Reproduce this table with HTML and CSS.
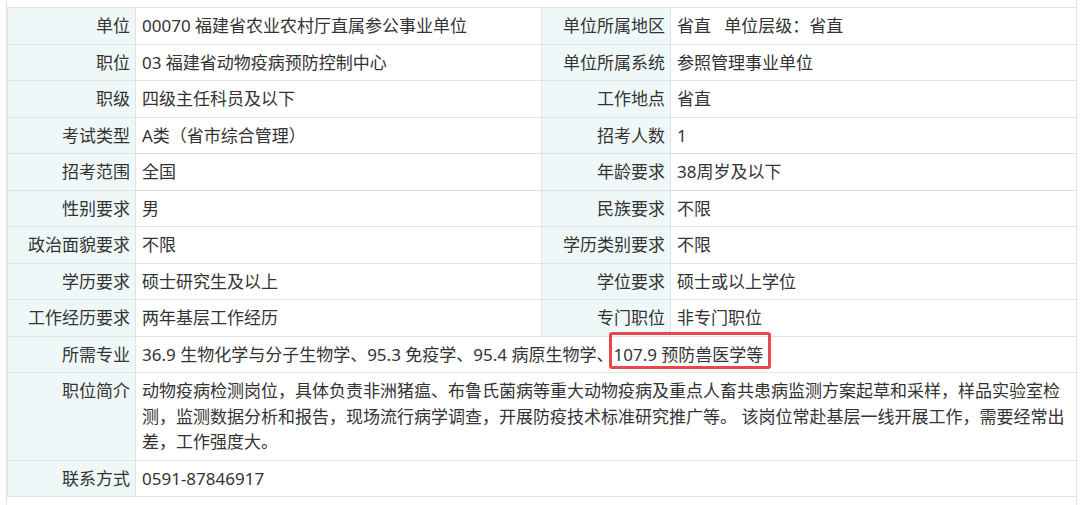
FILE: index.html
```html
<!DOCTYPE html>
<html lang="zh-CN">
<head>
<meta charset="utf-8">
<title>职位信息</title>
<link rel="stylesheet" href="styles.css">
</head>
<body>
<div class="wrap">
  <table class="info">
    <colgroup>
      <col class="c-label1">
      <col class="c-value">
      <col class="c-label2">
      <col class="c-value">
    </colgroup>
    <tbody>
      <tr><th>单位</th><td>00070 福建省农业农村厅直属参公事业单位</td><th>单位所属地区</th><td>省直&nbsp;&nbsp;&nbsp;单位层级：省直</td></tr>
      <tr><th>职位</th><td>03 福建省动物疫病预防控制中心</td><th>单位所属系统</th><td>参照管理事业单位</td></tr>
      <tr><th>职级</th><td>四级主任科员及以下</td><th>工作地点</th><td>省直</td></tr>
      <tr><th>考试类型</th><td>A类（省市综合管理）</td><th>招考人数</th><td>1</td></tr>
      <tr><th>招考范围</th><td>全国</td><th>年龄要求</th><td>38周岁及以下</td></tr>
      <tr><th>性别要求</th><td>男</td><th>民族要求</th><td>不限</td></tr>
      <tr><th>政治面貌要求</th><td>不限</td><th>学历类别要求</th><td>不限</td></tr>
      <tr><th>学历要求</th><td>硕士研究生及以上</td><th>学位要求</th><td>硕士或以上学位</td></tr>
      <tr><th>工作经历要求</th><td>两年基层工作经历</td><th>专门职位</th><td>非专门职位</td></tr>
      <tr><th>所需专业</th><td colspan="3">36.9 生物化学与分子生物学、95.3 免疫学、95.4 病原生物学、<span class="mark">107.9 预防兽医学等</span></td></tr>
      <tr><th class="top">职位简介</th><td colspan="3">动物疫病检测岗位，具体负责非洲猪瘟、布鲁氏菌病等重大动物疫病及重点人畜共患病监测方案起草和采样，样品实验室检测，监测数据分析和报告，现场流行病学调查，开展防疫技术标准研究推广等。 该岗位常赴基层一线开展工作，需要经常出差，工作强度大。</td></tr>
      <tr><th>联系方式</th><td colspan="3">0591-87846917</td></tr>
    </tbody>
  </table>
</div>
</body>
</html>
```
FILE: styles.css
```css
html, body {
  margin: 0;
  padding: 0;
  background: #ffffff;
}

body {
  font-family: "Noto Sans", "Noto Sans CJK SC", sans-serif;
  font-size: 17px;
  color: #333333;
}

.wrap {
  margin-left: 6px;
  width: 1069px;
  height: 505px;
  padding-top: 7px;
  box-sizing: content-box;
  border-left: 1px solid #e6e6e6;
  border-right: 1px solid #e6e6e6;
}

.info {
  width: 1069px;
  table-layout: fixed;
  border-collapse: collapse;
  border: 1px solid #e2e2e2;
}

.c-label1 { width: 128px; }
.c-label2 { width: 129px; }
.c-value { width: 406px; }

.info th,
.info td {
  border: 1px solid #e2e2e2;
  padding: 5px 6px;
  line-height: 25.5px;
  vertical-align: middle;
  font-weight: normal;
}

.info th {
  background: #eff8f8;
  text-align: right;
  padding-right: 5px;
  white-space: nowrap;
}

.info th.top {
  vertical-align: top;
}

.info td {
  text-align: left;
  background: #ffffff;
}

.mark {
  position: relative;
  display: inline-block;
  white-space: nowrap;
  line-height: 25.5px;
  vertical-align: top;
}

.mark::after {
  content: "";
  position: absolute;
  left: -4px;
  right: -8px;
  top: -10px;
  bottom: -2px;
  border: 3px solid #e8474c;
  border-radius: 3px;
}
```
